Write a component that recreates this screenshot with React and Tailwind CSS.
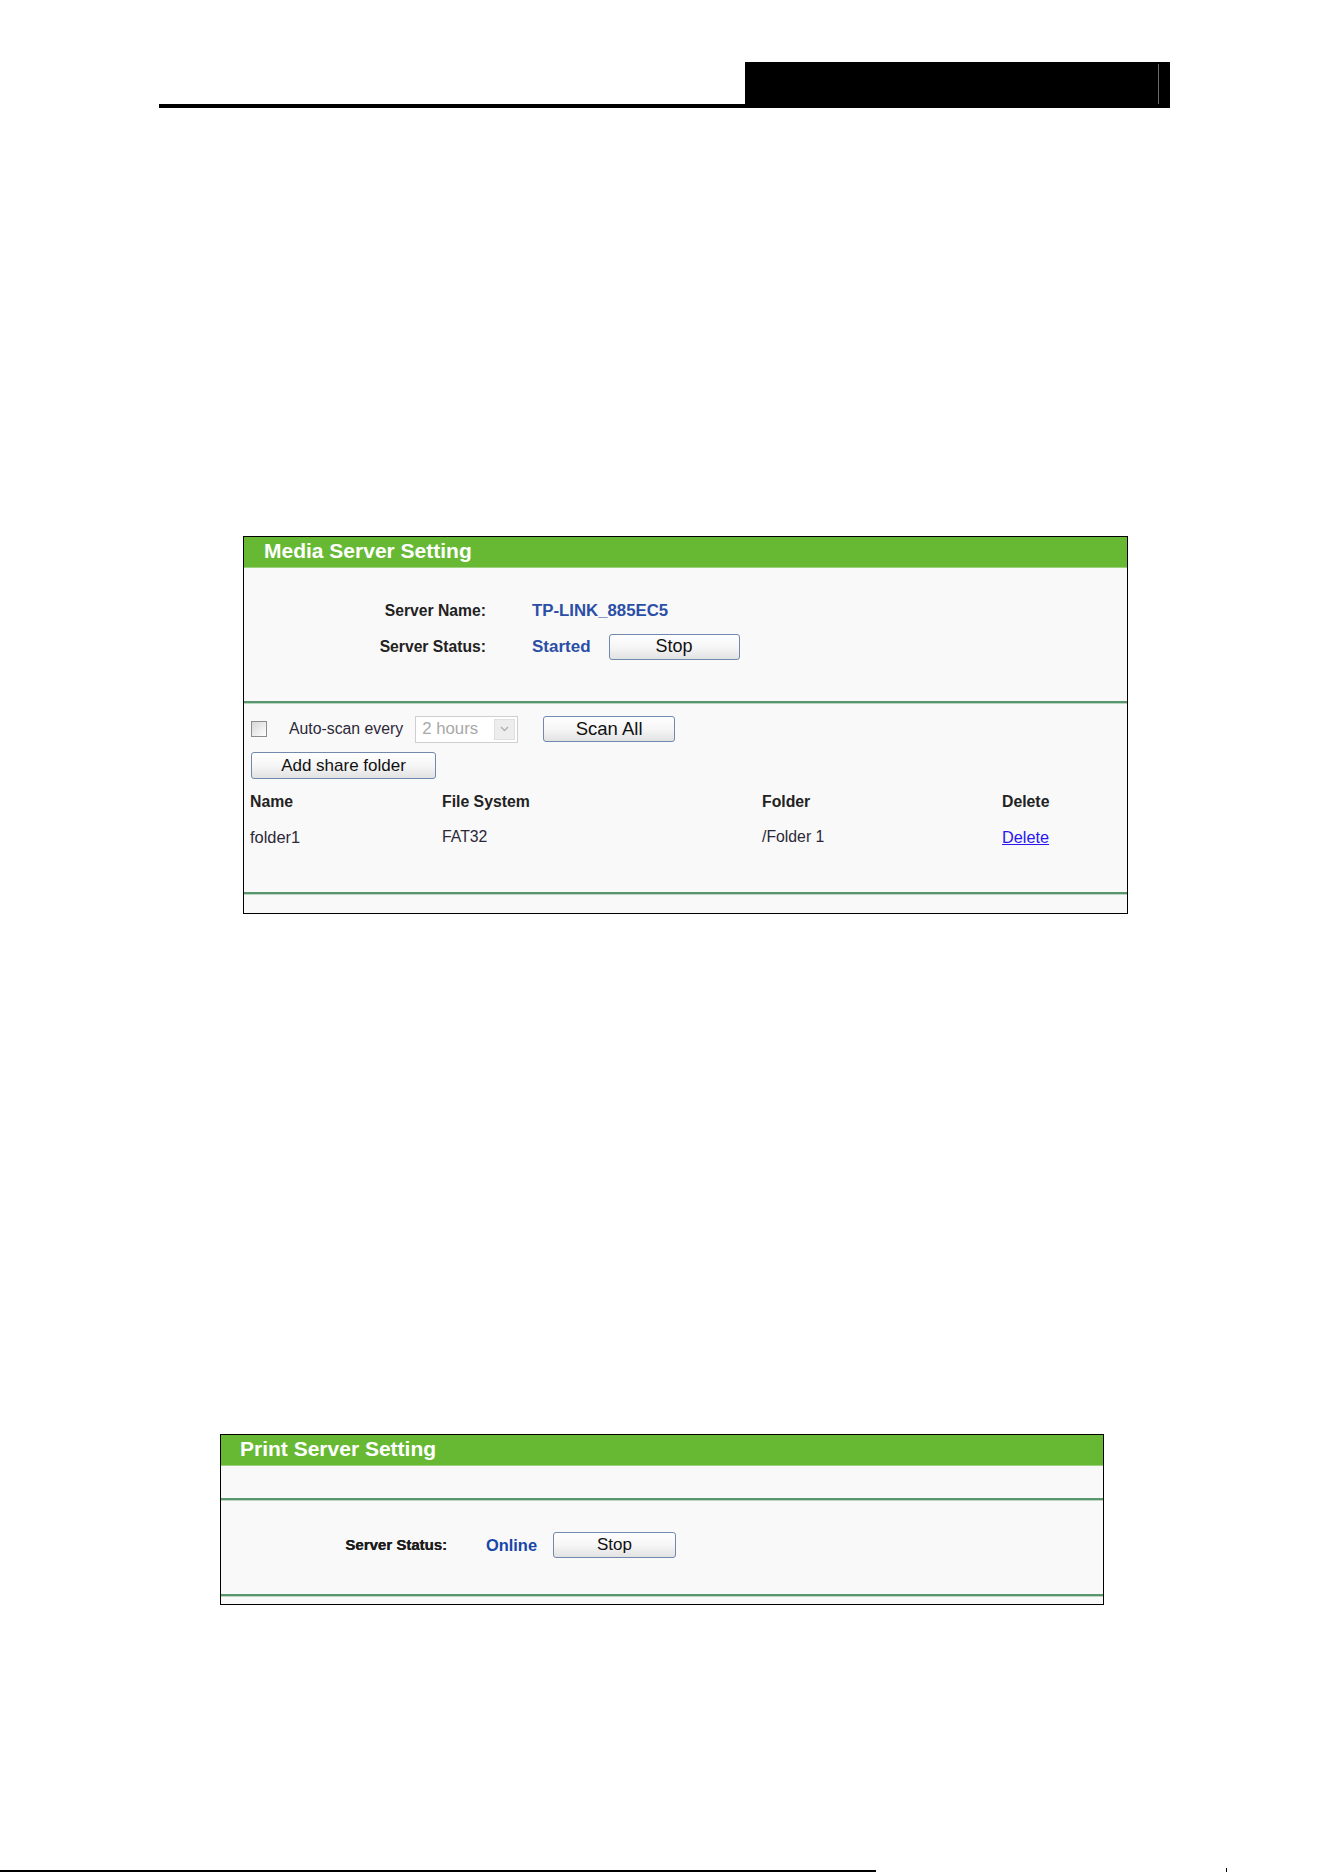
import React from "react";

const font = { fontFamily: '"Liberation Sans", Arial, sans-serif' };

function Btn({ children, className = "" }) {
  return (
    <div
      className={
        "flex items-center justify-center rounded-[3px] border border-[#7089ad] bg-linear-to-b from-white via-[#f6f6f6] to-[#e2e2e2] text-[#111] " +
        className
      }
    >
      {children}
    </div>
  );
}

function Separator() {
  return (
    <div className="flex flex-col">
      <div className="h-[2px] bg-[#5a966d]" />
      <div className="h-px bg-[#b9d6c2]" />
    </div>
  );
}

function PanelHeader({ title, pl }) {
  return (
    <div className={"flex h-[31px] items-center border-b border-[#9dd27c] bg-[#67b934] pb-[3px] " + pl}>
      <span className="text-[21px] font-bold leading-none text-white">{title}</span>
    </div>
  );
}

function MediaServer() {
  return (
    <div className="ml-[243px] flex h-[378px] w-[885px] flex-col border border-black bg-[#f9f9f9]">
      <PanelHeader title="Media Server Setting" pl="pl-[20px]" />

      {/* server name / status */}
      <div className="flex flex-col gap-[5px] pb-[40px] pt-[28px]">
        <div className="flex h-[30px] items-center">
          <div className="w-[242px] text-right text-[15.7px] font-bold text-[#222]">Server Name:</div>
          <div className="ml-[46px] text-[16.8px] font-bold text-[#2b4fa6]">TP-LINK_885EC5</div>
        </div>
        <div className="flex h-[30px] items-center pt-[1px]">
          <div className="w-[242px] text-right text-[15.7px] font-bold text-[#222]">Server Status:</div>
          <div className="ml-[46px] text-[17px] font-bold text-[#2b4fa6]">Started</div>
          <Btn className="ml-[18px] h-[26px] w-[131px] text-[18px]">Stop</Btn>
        </div>
      </div>

      <Separator />

      {/* scan controls */}
      <div className="flex flex-col pl-[7px] pt-[11px]">
        <div className="flex h-[28px] items-center">
          <div className="h-[16px] w-[16px] border border-[#8c8c8c] bg-linear-to-br from-[#d6d6d6] to-white" />
          <span className="ml-[22px] text-[15.8px] text-[#2c2838]">Auto-scan every</span>
          <div className="ml-[12px] flex h-[27px] w-[103px] items-stretch border border-[#cfcfcf] bg-white">
            <span className="flex flex-1 items-center pl-[6px] text-[16.8px] text-[#a8a8a8]">2 hours</span>
            <div className="my-[2px] mr-[2px] flex w-[21px] items-center justify-center border border-[#e0e0e0] bg-[#ededed]">
              <svg width="9" height="6" viewBox="0 0 9 6">
                <path d="M1 1l3.5 3.5L8 1" fill="none" stroke="#b0b0b0" strokeWidth="1.4" />
              </svg>
            </div>
          </div>
          <Btn className="ml-[25px] h-[26px] w-[132px] text-[18.5px]">Scan All</Btn>
        </div>
        <Btn className="mt-[9px] h-[27px] w-[185px] text-[17px]">Add share folder</Btn>
      </div>

      {/* shared folders */}
      <div className="mt-[8px] flex flex-col pl-[6px] text-[15.8px]">
        <div className="flex h-[30px] items-center font-bold text-[#222]">
          <span className="w-[192px]">Name</span>
          <span className="w-[320px]">File System</span>
          <span className="w-[240px]">Folder</span>
          <span>Delete</span>
        </div>
        <div className="mt-[5px] flex h-[30px] items-center text-[#2c2838]">
          <span className="w-[192px] text-[16.4px]">folder1</span>
          <span className="w-[320px]">FAT32</span>
          <span className="w-[240px]">/Folder 1</span>
          <span className="text-[16.3px] text-[#2a16ee] underline">Delete</span>
        </div>
      </div>

      <div className="mt-auto flex flex-col pb-[18px]">
        <Separator />
      </div>
    </div>
  );
}

function PrintServer() {
  return (
    <div className="ml-[220px] flex h-[171px] w-[884px] flex-col border border-black bg-[#f9f9f9]">
      <PanelHeader title="Print Server Setting" pl="pl-[19px]" />
      <div className="h-[32px]" />
      <Separator />
      <div className="flex h-[93px] items-center pb-[5px]">
        <div className="w-[226px] text-right text-[15px] font-bold text-[#1c1c1c] [text-shadow:0.3px_0_0_#1c1c1c]">
          Server Status:
        </div>
        <div className="ml-[39px] text-[16.4px] font-bold text-[#1747a8]">Online</div>
        <Btn className="ml-[16px] h-[26px] w-[123px] text-[17px]">Stop</Btn>
      </div>
      <Separator />
    </div>
  );
}

export default function App() {
  return (
    <div style={font} className="flex h-[1872px] w-[1324px] flex-col overflow-hidden bg-white">
      {/* running page header */}
      <div className="ml-[159px] mt-[62px] flex w-[1011px] flex-col">
        <div className="flex justify-end">
          <div className="flex h-[42px] w-[425px] justify-end bg-black pr-[11px] pt-[2px]">
            <div className="w-px bg-[#6a6a6a]" />
          </div>
        </div>
        <div className="h-[4px] bg-black" />
      </div>

      <div className="mt-[428px]">
        <MediaServer />
      </div>

      <div className="mt-[520px]">
        <PrintServer />
      </div>

      {/* page footer rule */}
      <div className="mt-auto flex h-[4px] items-end">
        <div className="h-[2px] w-[876px] bg-black" />
        <div className="ml-[350px] h-[4px] w-px bg-black" />
      </div>
    </div>
  );
}
